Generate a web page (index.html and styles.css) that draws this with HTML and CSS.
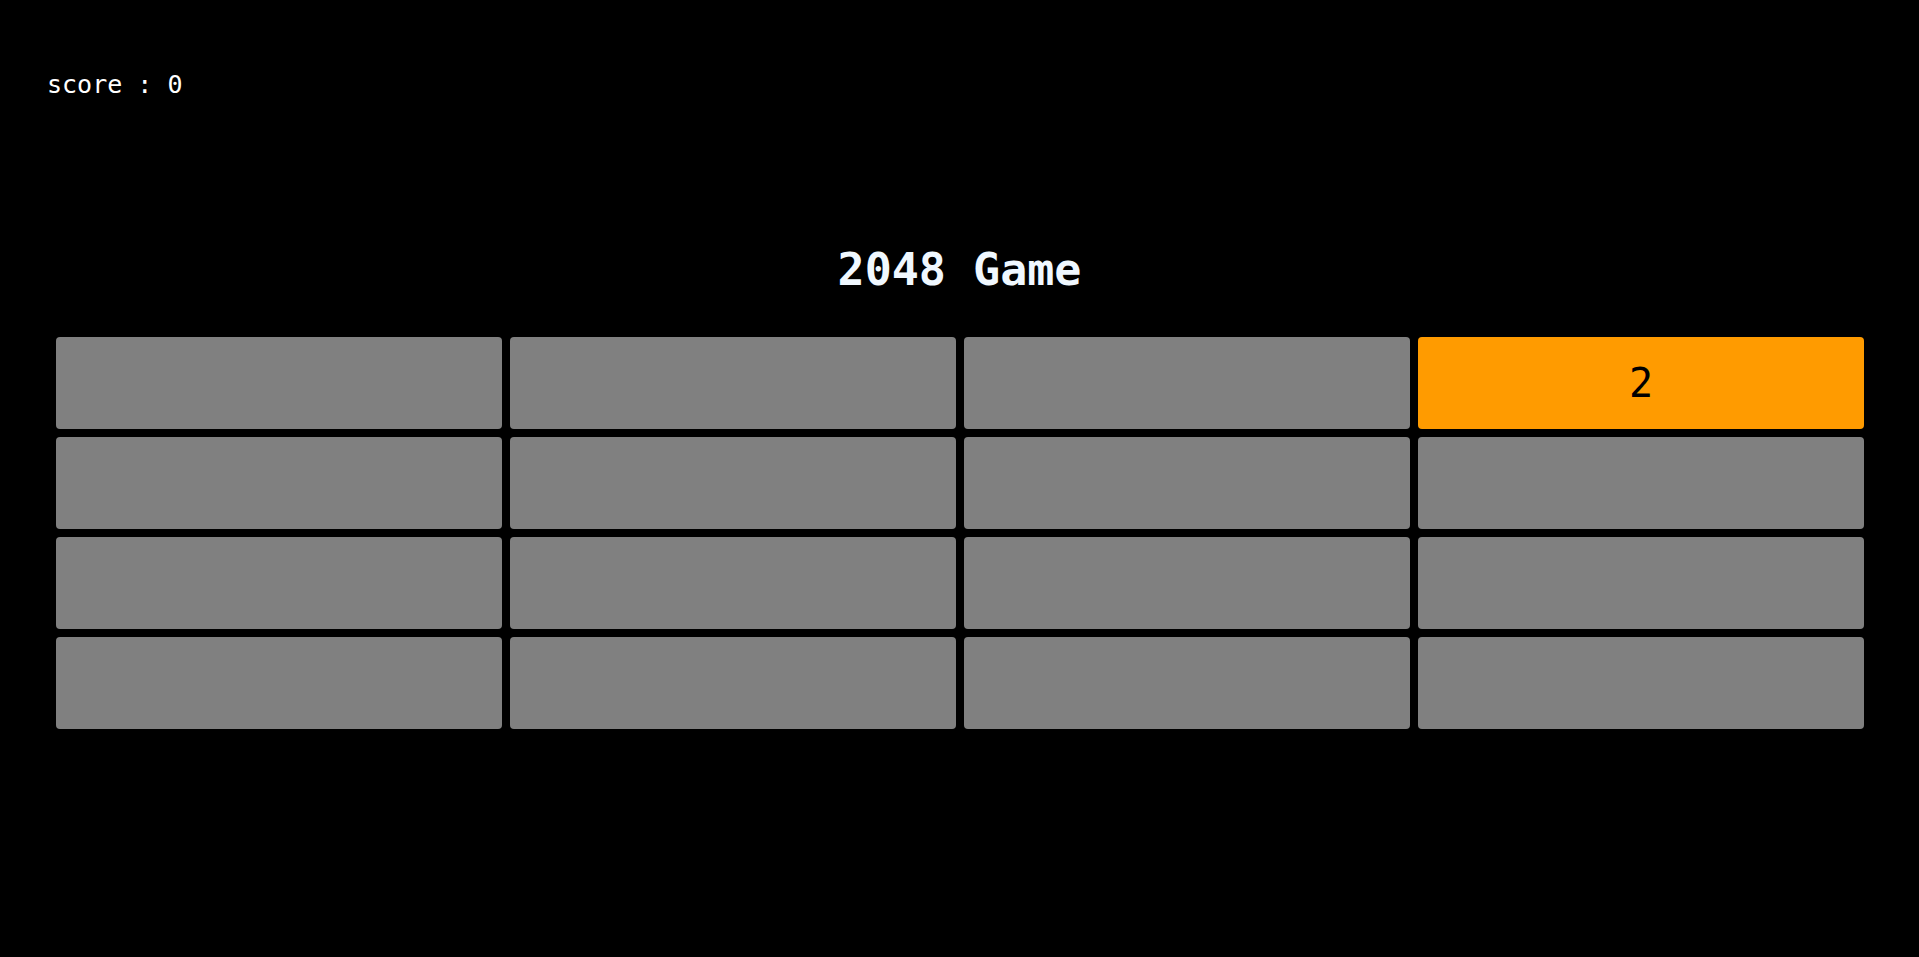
FILE: index.html
```html
<!DOCTYPE html>
<html lang="en">
<head>
    <meta charset="UTF-8">
    <meta name="viewport" content="width=device-width, initial-scale=1.0">
    <title>2048 Game</title>
    <link rel="stylesheet" href="styles.css">
</head>
<body>
<div class="score">score : <span id="score">0</span></div>

<h1 class="title">2048 Game</h1>

<!-- 4x4 game board -->
<div class="board">
    <div class="cell"></div>
    <div class="cell"></div>
    <div class="cell"></div>
    <div class="cell tile-2">2</div>

    <div class="cell"></div>
    <div class="cell"></div>
    <div class="cell"></div>
    <div class="cell"></div>

    <div class="cell"></div>
    <div class="cell"></div>
    <div class="cell"></div>
    <div class="cell"></div>

    <div class="cell"></div>
    <div class="cell"></div>
    <div class="cell"></div>
    <div class="cell"></div>
</div>
</body>
</html>
```

FILE: styles.css
```css
body {
    font-family: "DejaVu Sans Mono", "Liberation Mono", monospace;
    margin: 0;
    background-color: #000;
    color: aliceblue;
}

.score {
    padding: 71px 47px 0;
    font-size: 25px;
    line-height: 28px;
    color: #fff;
}

.title {
    margin: 145px 0 0;
    font-size: 45px;
    line-height: 52px;
    font-weight: bold;
    text-align: center;
}

.board {
    display: grid;
    grid-template-columns: repeat(4, 1fr);
    grid-auto-rows: 92px;
    gap: 8px;
    margin: 41px 55px 0 56px;
}

.cell {
    display: flex;
    align-items: center;
    justify-content: center;
    background-color: gray;
    border-radius: 4px;
    font-size: 40px;
    color: #000;
}

.tile-2 {
    background-color: #ff9b00;
}
```
